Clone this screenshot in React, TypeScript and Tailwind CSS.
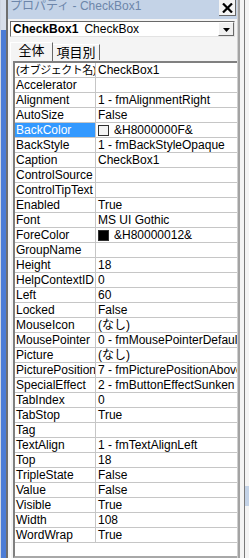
import React from 'react'

// VBE property window — CheckBox1
type Row = { name: string; value: string; swatch?: 'white' | 'black'; selected?: boolean; tight?: boolean }

const ROWS: Row[] = [
  { name: '(オブジェクト名)', value: 'CheckBox1', tight: true },
  { name: 'Accelerator', value: '' },
  { name: 'Alignment', value: '1 - fmAlignmentRight' },
  { name: 'AutoSize', value: 'False' },
  { name: 'BackColor', value: '&H8000000F&', swatch: 'white', selected: true },
  { name: 'BackStyle', value: '1 - fmBackStyleOpaque' },
  { name: 'Caption', value: 'CheckBox1' },
  { name: 'ControlSource', value: '' },
  { name: 'ControlTipText', value: '' },
  { name: 'Enabled', value: 'True' },
  { name: 'Font', value: 'MS UI Gothic' },
  { name: 'ForeColor', value: '&H80000012&', swatch: 'black' },
  { name: 'GroupName', value: '' },
  { name: 'Height', value: '18' },
  { name: 'HelpContextID', value: '0' },
  { name: 'Left', value: '60' },
  { name: 'Locked', value: 'False' },
  { name: 'MouseIcon', value: '(なし)' },
  { name: 'MousePointer', value: '0 - fmMousePointerDefault' },
  { name: 'Picture', value: '(なし)' },
  { name: 'PicturePosition', value: '7 - fmPicturePositionAboveCenter' },
  { name: 'SpecialEffect', value: '2 - fmButtonEffectSunken' },
  { name: 'TabIndex', value: '0' },
  { name: 'TabStop', value: 'True' },
  { name: 'Tag', value: '' },
  { name: 'TextAlign', value: '1 - fmTextAlignLeft' },
  { name: 'Top', value: '18' },
  { name: 'TripleState', value: 'False' },
  { name: 'Value', value: 'False' },
  { name: 'Visible', value: 'True' },
  { name: 'Width', value: '108' },
  { name: 'WordWrap', value: 'True' },
]

const FONT = "font-['Liberation_Sans','Noto_Sans_CJK_JP',sans-serif]"

function DownArrow() {
  return (
    <svg width="7" height="4" viewBox="0 0 7 4">
      <path d="M0 0h7L3.5 4z" fill="#000" />
    </svg>
  )
}

function DropButton({ className = '' }: { className?: string }) {
  return (
    <div
      className={`flex items-end justify-center pb-[3px] bg-[#f0f0f0] border border-t-[#ffffff] border-l-[#ffffff] border-r-[#696969] border-b-[#696969] ${className}`}
    >
      <DownArrow />
    </div>
  )
}

export default function App() {
  return (
    <div className={`flex w-[249px] h-[558px] overflow-hidden bg-[#f0f0f0] text-black ${FONT}`}>
      {/* desktop strip behind, left */}
      <div className="flex w-[8px] shrink-0">
        <div className="w-[1px] bg-[#cfd6e2]" />
        <div className="flex flex-col w-[5px]">
          <div className="h-[30px] bg-[#d7deea]" />
          <div className="flex-1 bg-[#4b7cd6]" />
        </div>
        <div className="w-[2px] bg-[#6e6e6e]" />
      </div>

      {/* properties window */}
      <div className="flex flex-col w-[229px] shrink-0 bg-[#f4f4f4]">
        {/* title bar */}
        <div className="flex justify-between h-[19px] bg-[#c4d3e7]">
          <span className="pl-[2px] text-[12px] leading-[12px] text-[#6d86aa] whitespace-nowrap">
            プロパティ - CheckBox1
          </span>
          <div className="flex items-center justify-center w-[17px] h-[16px] mr-[1px] bg-[#f4f4f4] border-r border-b border-r-[#696969] border-b-[#696969]">
            <svg width="11" height="10" viewBox="0 0 11 10">
              <path d="M1 0.5L10 9.5M10 0.5L1 9.5" stroke="#000" strokeWidth="2.2" />
            </svg>
          </div>
        </div>

        {/* object combo */}
        <div className="flex items-center h-[16px] mt-[2px] ml-[2px] w-[225px] bg-white border border-t-[#696969] border-l-[#696969] border-r-[#e3e3e3] border-b-[#e3e3e3]">
          <span className="pl-[2px] text-[12px] leading-[14px] font-bold whitespace-nowrap">CheckBox1</span>
          <span className="pl-[6px] text-[12px] leading-[14px] whitespace-nowrap">CheckBox</span>
          <DropButton className="ml-auto w-[16px] h-[14px]" />
        </div>

        {/* tabs */}
        <div className="flex items-end h-[24px] pl-[2px]">
          <div className="flex items-start justify-center w-[43px] h-[19px] pt-[1px] bg-[#f4f4f4] border-t border-l border-r border-t-[#ffffff] border-l-[#ffffff] border-r-[#696969] text-[13px] leading-[14px]">
            全体
          </div>
          <div className="flex items-start justify-center w-[47px] h-[16px] mb-[1px] pt-[1px] border-t border-r border-t-[#ffffff] border-r-[#696969] text-[13px] leading-[14px]">
            項目別
          </div>
        </div>

        {/* tab page + property grid */}
        <div className="flex flex-1 min-h-0 pl-[2px] pr-[2px]">
          <div className="flex flex-1 min-h-0 pl-[2px] border-l border-l-[#ffffff]">
            <div className="flex flex-col flex-1 min-h-0 overflow-hidden bg-white border-2 border-t-[#808080] border-l-[#808080] border-r-[#a8a8a8] border-b-[#a8a8a8]">
              {ROWS.map((r) => (
                <div key={r.name} className="flex h-[15px] shrink-0 border-b border-b-[#c6c6c6]">
                  <div
                    className={`w-[81px] shrink-0 pl-[1px] border-r border-r-[#c6c6c6] leading-[14px] whitespace-nowrap overflow-hidden ${
                      r.selected ? 'bg-[#3399ff] text-white' : ''
                    } ${r.tight ? 'text-[11px] tracking-[-0.5px]' : 'text-[12px]'}`}
                  >
                    {r.name}
                  </div>
                  <div className="flex items-center flex-1 min-w-0 pl-[2px] text-[12px] leading-[14px] whitespace-nowrap overflow-hidden">
                    {r.swatch && (
                      <span
                        className={`w-[11px] h-[11px] mr-[5px] shrink-0 border border-[#303030] ${
                          r.swatch === 'black' ? 'bg-black' : 'bg-[#f4f4f4]'
                        }`}
                      />
                    )}
                    <span>{r.value}</span>
                    {r.selected && <DropButton className="ml-auto w-[16px] h-[14px] shrink-0" />}
                  </div>
                </div>
              ))}
            </div>
          </div>
        </div>
      </div>

      {/* window frame */}
      <div className="w-[3px] shrink-0 bg-[#a3a3a3] border-l border-l-[#d0d0d0]" />

      {/* another window behind, right */}
      <div className="flex w-[9px] shrink-0 bg-[#f4f4f4]">
        <div className="w-[4px]" />
        <div className="w-[1px] bg-[#7a7a7a]" />
        <div className="flex flex-col flex-1">
          <div className="h-[486px]" />
          <div className="h-[20px] bg-[#c4d3e7]" />
        </div>
      </div>
    </div>
  )
}
